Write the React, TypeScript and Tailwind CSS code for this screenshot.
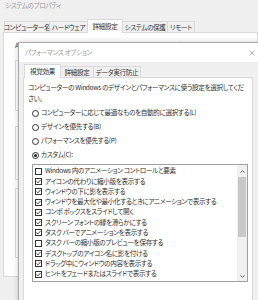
import React from "react";

const effects: [string, boolean][] = [
  ["Windows 内のアニメーション コントロールと要素", false],
  ["アイコンの代わりに縮小版を表示する", true],
  ["ウィンドウの下に影を表示する", true],
  ["ウィンドウを最大化や最小化するときにアニメーションで表示する", true],
  ["コンボ ボックスをスライドして開く", true],
  ["スクリーン フォントの縁を滑らかにする", true],
  ["タスク バーでアニメーションを表示する", true],
  ["タスク バーの縮小版のプレビューを保存する", false],
  ["デスクトップのアイコン名に影を付ける", true],
  ["ドラッグ中にウィンドウの内容を表示する", true],
  ["ヒントをフェードまたはスライドで表示する", true],
];

const radios: [string, boolean][] = [
  ["コンピューターに応じて最適なものを自動的に選択する(L)", false],
  ["デザインを優先する(B)", false],
  ["パフォーマンスを優先する(P)", false],
  ["カスタム(C):", true],
];

function Check({ on }: { on: boolean }) {
  return (
    <span className="flex h-[7px] w-[7px] shrink-0 items-center justify-center border border-[#333] bg-white">
      {on && (
        <svg width="5" height="5" viewBox="0 0 5 5">
          <path d="M0.5 2.5 L1.9 3.9 L4.5 1" fill="none" stroke="#333" strokeWidth="0.9" />
        </svg>
      )}
    </span>
  );
}

function Radio({ label, on }: { label: string; on: boolean }) {
  return (
    <div className="flex h-[14px] items-center gap-[2px]">
      <span className="flex h-[7px] w-[7px] shrink-0 items-center justify-center rounded-full border border-[#333] bg-white">
        {on && <span className="h-[3px] w-[3px] rounded-full bg-[#222]" />}
      </span>
      <span className="whitespace-nowrap">{label}</span>
    </div>
  );
}

function Chevron({ up }: { up?: boolean }) {
  return (
    <svg width="5" height="3" viewBox="0 0 5 3">
      <path d={up ? "M0.5 2.6 L2.5 0.6 L4.5 2.6" : "M0.5 0.4 L2.5 2.4 L4.5 0.4"} fill="none" stroke="#606060" strokeWidth="1" />
    </svg>
  );
}

export default function App() {
  return (
    <div className="relative h-[300px] w-[258px] overflow-hidden bg-[#f0f0f0] font-['Noto_Sans_CJK_JP',sans-serif] text-[6.6px] tracking-[-0.35px] text-[#303030] [font-feature-settings:'palt']">
      {/* system properties window, behind the dialog */}
      <div className="h-[19px] pl-[5px] leading-[11px] text-[#9a9a9a]">システムのプロパティ</div>
      <div className="flex h-[13px] items-end whitespace-nowrap pl-[4px] leading-none">
        <div className="flex h-[11px] w-[46px] items-center justify-center border border-b-0 border-[#d9d9d9]">コンピューター名</div>
        <div className="-ml-px flex h-[11px] w-[39px] items-center justify-center border border-b-0 border-[#d9d9d9]">ハードウェア</div>
        <div className="relative z-10 -mb-px -ml-px flex h-[14px] w-[36px] items-center justify-center border border-b-0 border-[#d9d9d9] bg-white">詳細設定</div>
        <div className="-ml-px flex h-[11px] w-[46px] items-center justify-center border border-b-0 border-[#d9d9d9]">システムの保護</div>
        <div className="-ml-px flex h-[11px] w-[28px] items-center justify-center border border-b-0 border-[#d9d9d9]">リモート</div>
      </div>
      <div className="ml-[3px] h-[245px] border border-[#d9d9d9] bg-white pl-[11px] pt-[7px]">
        <div className="whitespace-nowrap leading-[10px]">Administrator としてログオンしなければ、これらのほとんどは変更できません。</div>
        <div className="mt-[10px] h-[51px] border border-[#dcdcdc]" />
        <div className="mt-[15px] h-[54px] border border-[#dcdcdc]" />
        <div className="mt-[8px] h-[70px] border border-[#dcdcdc]" />
      </div>

      {/* performance options dialog */}
      <div className="absolute left-[18px] top-[42px] h-[270px] w-[250px] border border-[#a8a8a8] bg-[#f0f0f0] shadow-[0_0_6px_rgba(0,0,0,0.18)]">
        <div className="flex h-[19px] items-center justify-between bg-white pl-[6px] pr-[12px] text-[#9a9a9a]">
          <span>パフォーマンス オプション</span>
          <svg width="6" height="6" viewBox="0 0 6 6">
            <path d="M0.5 0.5 L5.5 5.5 M5.5 0.5 L0.5 5.5" stroke="#999" strokeWidth="0.8" />
          </svg>
        </div>
        <div className="pl-[4px] pt-[2px]">
          <div className="flex h-[13px] items-end whitespace-nowrap pl-[1px] leading-none">
            <div className="relative z-10 -mb-px flex h-[14px] w-[37px] items-center justify-center border border-b-0 border-[#d9d9d9] bg-white">視覚効果</div>
            <div className="-ml-px flex h-[11px] w-[34px] items-center justify-center border border-b-0 border-[#d9d9d9]">詳細設定</div>
            <div className="-ml-px flex h-[11px] w-[48px] items-center justify-center border border-b-0 border-[#d9d9d9]">データ実行防止</div>
          </div>
          <div className="h-[250px] w-[230px] border border-[#d9d9d9] bg-white pl-[4px] pt-[4px]">
            <div className="whitespace-nowrap leading-[11px]">
              <div>コンピューターの Windows のデザインとパフォーマンスに使う設定を選択してくだ</div>
              <div>さい。</div>
            </div>
            <div className="ml-[4px] mt-[2px]">
              {radios.map(([label, on]) => (
                <Radio key={label} label={label} on={on} />
              ))}
            </div>
            <div className="ml-[4px] mt-[2px] flex h-[118px] w-[216px] border border-[#a0a0a0]">
              <div className="flex-1 pl-[2px] pt-[1px]">
                {effects.map(([label, on]) => (
                  <div key={label} className="flex h-[10.3px] items-center gap-[3px] whitespace-nowrap">
                    <Check on={on} />
                    <span>{label}</span>
                  </div>
                ))}
              </div>
              <div className="flex w-[10px] flex-col bg-[#f0f0f0]">
                <div className="flex h-[12px] items-center justify-center">
                  <Chevron up />
                </div>
                <div className="mx-[1px] h-[60px] bg-[#c8c8c8]" />
                <div className="flex-1" />
                <div className="flex h-[9px] items-center justify-center">
                  <Chevron />
                </div>
              </div>
            </div>
          </div>
        </div>
      </div>
    </div>
  );
}
